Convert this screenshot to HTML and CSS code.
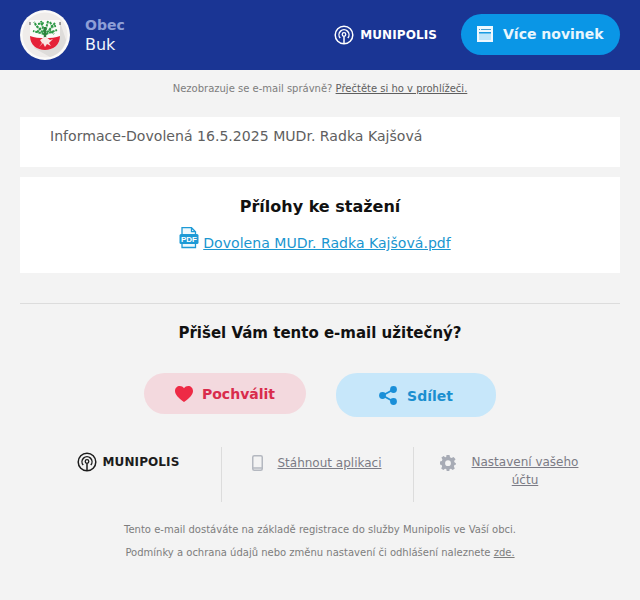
FILE: index.html
```html
<!DOCTYPE html>
<html lang="cs">
<head>
<meta charset="utf-8">
<title>Obec Buk</title>
<link rel="stylesheet" href="styles.css">
</head>
<body>
<header class="top">
  <div class="crest">
    <svg width="50" height="50" viewBox="0 0 50 50">
      <circle cx="25" cy="25" r="25" fill="#fbfaf9"/>
      <circle cx="25" cy="25" r="22.500" fill="#efecea"/>
      <path d="M40 12L46 30A22 22 0 0 1 30 47L14 38Z" fill="#dedcda"/>
      <path d="M10 10H40V26C40 35 33 40 25 40C17 40 10 35 10 26Z" fill="#fbfbf9"/>
      <path d="M10 26C18 29 32 29 40 26C40 35 33 40 25 40C17 40 10 35 10 26Z" fill="#e52238"/>
      <g fill="none" stroke="#2f9a48" stroke-width="2" stroke-dasharray="2.500 .8">
        <path d="M25 25L15 14M25 25L21 11M25 23L28 11M25 25L35 13M24 24L13 21M26 24L37 20M18 18L14 12M31 17L36 16M21 18L17 22M29 19L34 24M18 14L24 13M30 12L33 18"/>
      </g>
      <path d="M23.800 28V17H26.200V28Z" fill="#2f7f3e"/>
      <path d="M19 37L22 33L20 30L24.500 27L26 27L30 30L33 29L29 33L31 36L27 34L25 37L23 33Z" fill="#f9e6e4"/>
      <path d="M10 12V15M40 12V15" stroke="#4a4a4a" stroke-width="1"/>
    </svg>
  </div>
  <div class="town">
    <div class="town-label">Obec</div>
    <div class="town-name">Buk</div>
  </div>
  <div class="brand brand-light">
    <svg class="brand-mark" width="20" height="20" viewBox="0 0 20 20" fill="none" stroke="currentColor">
      <circle cx="10" cy="10" r="8.800" stroke-width="1.500"/>
      <path d="M6.200 13A5 5 0 1 1 13.800 13" stroke-width="1.400"/>
      <circle cx="10" cy="9.500" r="1.800" stroke-width="1.300"/>
      <path d="M10 11.500V19" stroke-width="1.500"/>
    </svg>
    <span>MUNIPOLIS</span>
  </div>
  <a class="more" href="#">
    <svg width="16" height="16" viewBox="0 0 16 16">
      <rect width="16" height="16" fill="#eef8fe"/>
      <path d="M2 3.500H14" stroke="#4a9ed0" stroke-width="1" stroke-dasharray="1 1 10"/>
      <rect x="2" y="6" width="12" height="8" fill="#bfe5fa"/>
      <rect x="2" y="6" width="12" height="1.500" fill="#1a9be2"/>
    </svg>
    <span>Více novinek</span>
  </a>
</header>

<p class="notice">Nezobrazuje se e-mail správně? <a href="#">Přečtěte si ho v prohlížeči.</a></p>

<section class="card message">Informace-Dovolená 16.5.2025 MUDr. Radka Kajšová</section>

<section class="card files">
  <h2>Přílohy ke stažení</h2>
  <div class="file">
    <svg width="20" height="22" viewBox="0 0 20 22">
      <path d="M3 7V.7H12.500L16.500 4.700V7M12.500 .7V4.700H16.500M3 17V20.500H16.500V17" fill="#eef8fd" stroke="#1d9ad6" stroke-width="1.300"/>
      <rect x="0.500" y="7" width="19" height="10" rx="1.500" fill="#1d9ad6"/>
      <text x="10" y="15" class="pdf-label">PDF</text>
    </svg>
    <a href="#">Dovolena MUDr. Radka Kajšová.pdf</a>
  </div>
</section>

<hr class="rule">

<h2 class="ask">Přišel Vám tento e-mail užitečný?</h2>

<div class="actions">
  <a class="pill like" href="#">
    <svg width="18" height="16" viewBox="0 0 18 16"><path d="M9 16C3 11.500 0 8.500 0 5C0 2 2.200 0 4.800 0C6.500 0 8 .8 9 2.300C10 .8 11.500 0 13.200 0C15.800 0 18 2 18 5C18 8.500 15 11.500 9 16Z" fill="#ee2a45"/></svg>
    <span>Pochválit</span>
  </a>
  <a class="pill share" href="#">
    <svg width="18" height="19" viewBox="0 0 18 19" fill="#1a8fd8"><circle cx="3.500" cy="9.500" r="3.400"/><circle cx="14.500" cy="3.500" r="3.400"/><circle cx="14.500" cy="15.500" r="3.400"/><path d="M3.500 9.500L14.500 3.500M3.500 9.500L14.500 15.500" stroke="#1a8fd8" stroke-width="1.800"/></svg>
    <span class="share-text">Sdílet</span>
  </a>
</div>

<div class="footer-links">
  <div class="col col-brand">
    <div class="brand brand-dark">
      <svg class="brand-mark" width="20" height="20" viewBox="0 0 20 20" fill="none" stroke="currentColor">
        <circle cx="10" cy="10" r="8.800" stroke-width="1.500"/>
        <path d="M6.200 13A5 5 0 1 1 13.800 13" stroke-width="1.400"/>
        <circle cx="10" cy="9.500" r="1.800" stroke-width="1.300"/>
        <path d="M10 11.500V19" stroke-width="1.500"/>
      </svg>
      <span>MUNIPOLIS</span>
    </div>
  </div>
  <div class="col col-app">
    <svg width="11" height="16" viewBox="0 0 11 16"><rect x="0.750" y="0.750" width="9.500" height="14.500" rx="1.500" fill="#f3f3f3" stroke="#b4b8c0" stroke-width="1.500"/><path d="M1 13H10" stroke="#b4b8c0" stroke-width="1.500"/></svg>
    <a href="#">Stáhnout aplikaci</a>
  </div>
  <div class="col col-settings">
    <svg width="16" height="16" viewBox="0 0 16 16"><path fill-rule="evenodd" fill="#a7abb5" d="M6.500 0H9.500L10 2.300L11.500 3L13.600 1.900L15.600 4.300L14.100 6L14.500 7.300L16 8.500V9.500L14.400 10.100L13.900 11.500L14.800 13.600L12.700 15L11 13.700L9.700 14.100L9.300 16H6.700L6.300 14.100L5 13.700L3.300 15L1.200 13.600L2.100 11.500L1.600 10.100L0 9.500V6.600L1.900 6L2.400 4.600L1.400 2.600L3.600 .9L5.200 2.300L6.200 2ZM8 5.300A2.900 2.900 0 1 0 8 11.100A2.900 2.900 0 1 0 8 5.300Z"/></svg>
    <a href="#">Nastavení vašeho účtu</a>
  </div>
</div>

<footer class="legal">
  <p>Tento e-mail dostáváte na základě registrace do služby Munipolis ve Vaší obci.</p>
  <p>Podmínky a ochrana údajů nebo změnu nastavení či odhlášení naleznete <a href="#">zde.</a></p>
</footer>
</body>
</html>
```
FILE: styles.css
```css
* { box-sizing: border-box; }
html, body { margin: 0; padding: 0; }
body {
  width: 640px;
  height: 600px;
  overflow: hidden;
  background: #f3f3f3;
  font-family: "DejaVu Sans", sans-serif;
  color: #606060;
}
a { color: inherit; }

.top {
  display: flex;
  align-items: center;
  height: 70px;
  padding: 0 20px;
  background: #1a3594;
}
.crest { width: 50px; height: 50px; }
.crest svg { display: block; }
.town { margin-left: 15px; flex: 1; padding-top: 2px; }
.town-label { font-size: 14px; line-height: 18px; font-weight: 700; color: #8e9fd6; }
.town-name { font-size: 16px; line-height: 22px; color: #f2f5fb; }

.brand { display: flex; align-items: center; gap: 6px; }
.brand span { font-weight: 700; font-size: 12px; letter-spacing: 0.1px; }
.brand-light { color: #fff; margin-right: 24px; padding-bottom: 1px; }
.brand-dark { color: #1c1c1c; height: 20px; }
.brand-mark { display: block; }

.more {
  display: flex;
  align-items: center;
  gap: 10px;
  width: 159px;
  height: 41px;
  margin-top: -2px;
  padding-left: 16px;
  border-radius: 21px;
  background: #0a96e6;
  color: #e9f6fd;
  font-size: 14px;
  font-weight: 700;
  text-decoration: none;
}

.notice {
  margin: 12px 0 0;
  height: 35px;
  text-align: center;
  font-size: 10px;
  line-height: 13px;
  color: #7d7d7d;
}
.notice a { color: #5e5e5e; }

.card { margin: 0 20px; background: #fff; }
.message {
  height: 50px;
  margin-bottom: 10px;
  padding: 10px 30px;
  font-size: 14.08px;
  line-height: 19px;
}
.files { height: 96px; padding-top: 19px; text-align: center; }
h2 { margin: 0; font-size: 16px; line-height: 21px; font-weight: 700; color: #111; text-align: center; }
.file {
  display: flex;
  justify-content: center;
  align-items: flex-end;
  gap: 4px;
  margin-top: 10px;
  margin-right: 10px;
}
.file svg { display: block; margin-bottom: 4px; }
.file a { font-size: 14.08px; line-height: 19px; color: #1a96d0; }
.pdf-label { font-family: "Liberation Sans", sans-serif; font-size: 8px; font-weight: 700; fill: #fff; text-anchor: middle; }

.rule { margin: 30px 20px 0; border: 0; border-top: 1px solid #dcdcdc; }
.ask { margin-top: 19px; font-size: 15px; }

.actions { display: flex; justify-content: center; gap: 30px; margin-top: 29px; }
.pill {
  display: flex;
  align-items: center;
  justify-content: center;
  gap: 10px;
  border-radius: 21px;
  font-size: 14px;
  font-weight: 700;
  text-decoration: none;
}
.like { width: 162px; height: 41px; gap: 9px; background: #f3d9de; color: #d92c4c; }
.share { width: 160px; height: 44px; background: #c7e7fa; color: #1a8fd0; }
.share-text { padding-top: 2px; }

.footer-links { display: flex; margin: 30px 20px 0; height: 55px; font-size: 12px; line-height: 18px; color: #7b7b85; }
.col { display: flex; justify-content: center; }
.col-brand { width: 201px; padding: 5px 0 0 15px; }
.col-app { width: 192px; border-left: 1px solid #dcdcdc; gap: 14px; padding: 7px 1px 0 0; }
.col-app svg { margin-top: 1px; }
.col-settings { width: 207px; border-left: 1px solid #dcdcdc; gap: 15px; padding: 6px 41px 0 26px; text-align: center; }
.col-settings svg { flex: none; margin-top: 2px; }
.col-settings a { width: 110px; }

.legal { margin-top: 21px; text-align: center; font-size: 10px; line-height: 14px; color: #7d7d7d; }
.legal p { margin: 0 0 9px; }
```
